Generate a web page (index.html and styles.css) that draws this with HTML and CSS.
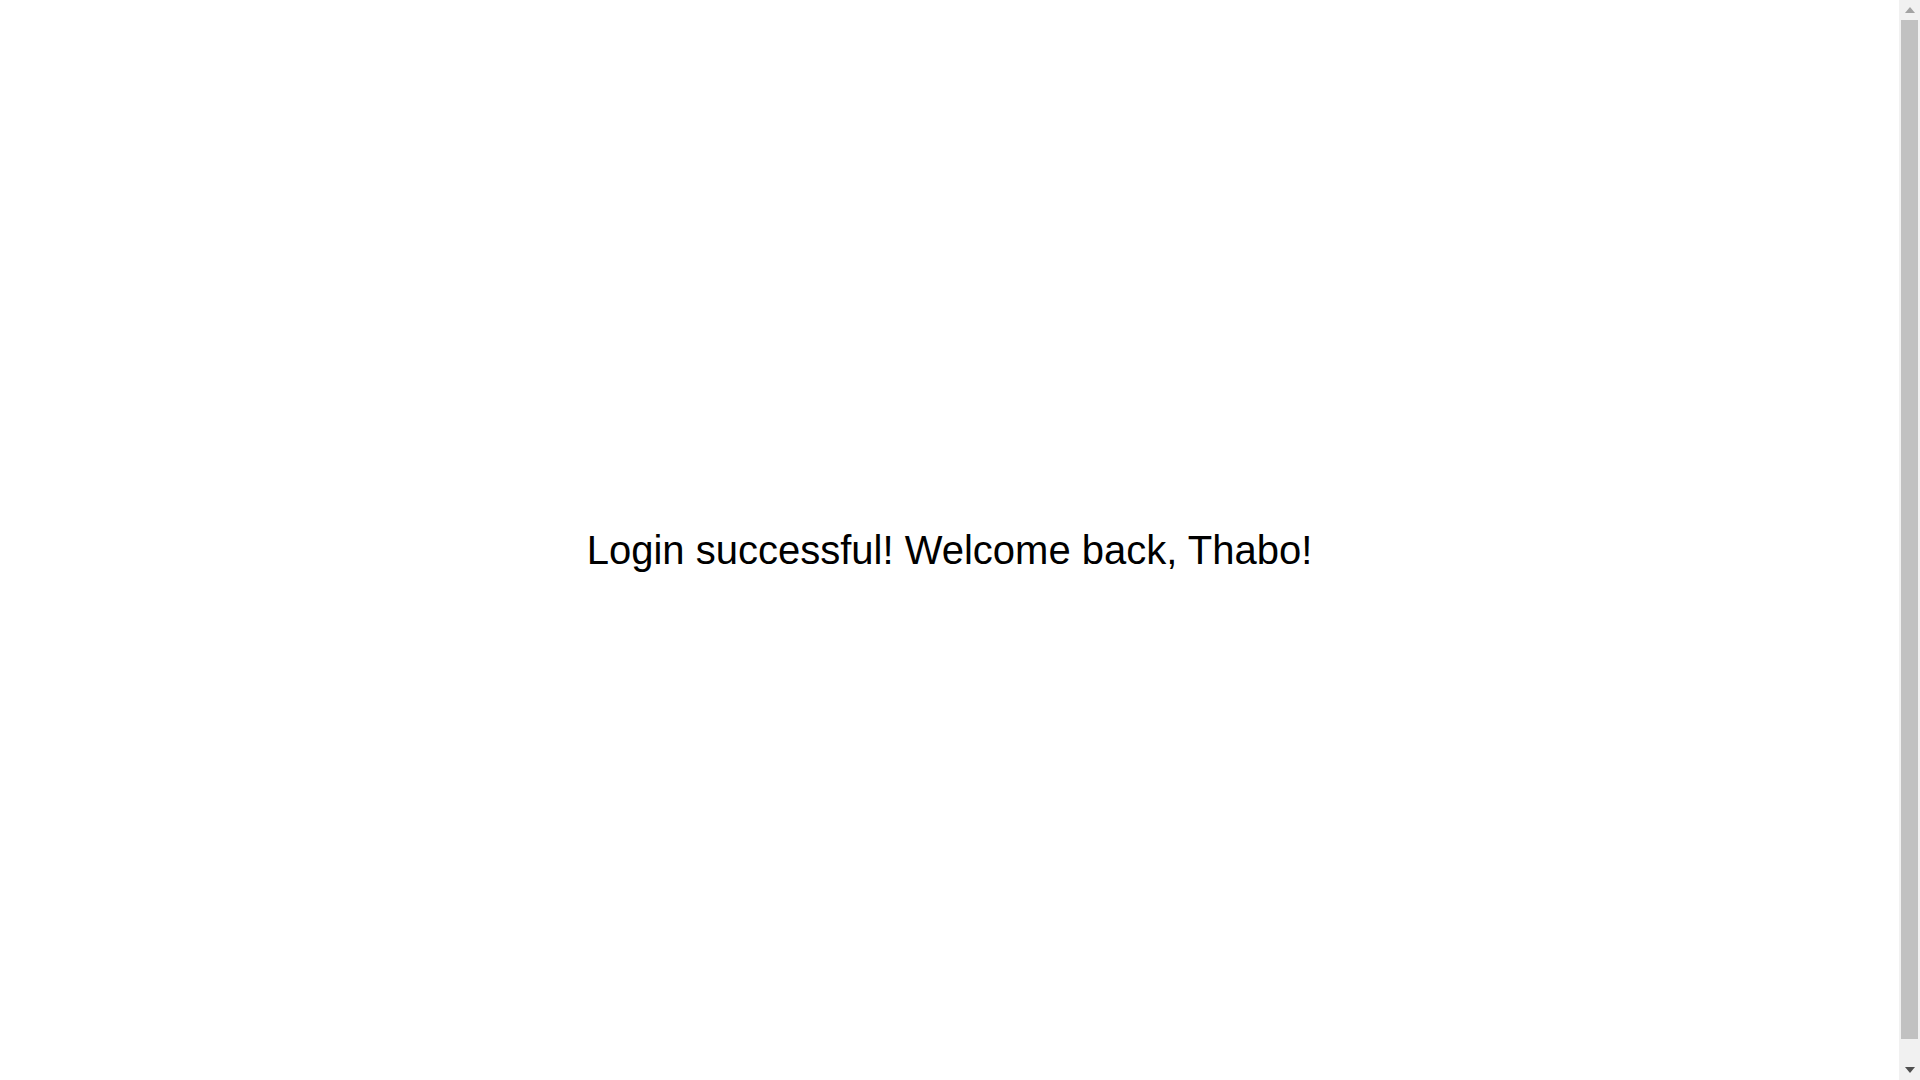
FILE: index.html
```html
<!DOCTYPE html>
<html lang="en">
<head>
<meta charset="utf-8">
<title>Login</title>
<link rel="stylesheet" href="styles.css">
</head>
<body>
<div class="message">Login successful! Welcome back, Thabo!</div>
<div class="scrollbar" aria-hidden="true">
  <div class="sb-button">
    <svg width="10" height="6" viewBox="0 0 10 6"><polygon points="0,6 10,6 5,0" fill="#a3a3a3"/></svg>
  </div>
  <div class="sb-track">
    <div class="sb-thumb"></div>
  </div>
  <div class="sb-button">
    <svg width="10" height="6" viewBox="0 0 10 6"><polygon points="0,0 10,0 5,6" fill="#505050"/></svg>
  </div>
</div>
</body>
</html>
```
FILE: styles.css
```css
html {
  padding-right: 21px;
}
body {
  margin: 8px;
  height: 100vh;
  display: flex;
  justify-content: center;
  align-items: center;
  background: #ffffff;
  font-family: "Liberation Sans", Arial, sans-serif;
}
.message {
  font-size: 40px;
  color: #000000;
  padding-top: 4px;
}
.scrollbar {
  position: fixed;
  top: 0;
  right: 0;
  width: 21px;
  height: 100vh;
  background: #f1f1f1;
  display: flex;
  flex-direction: column;
}
.sb-button {
  height: 20px;
  flex: 0 0 20px;
  display: flex;
  align-items: center;
  justify-content: center;
}
.sb-track {
  flex: 1;
  padding: 0 2px;
}
.sb-thumb {
  height: 98%;
  background: #c1c1c1;
}
```
